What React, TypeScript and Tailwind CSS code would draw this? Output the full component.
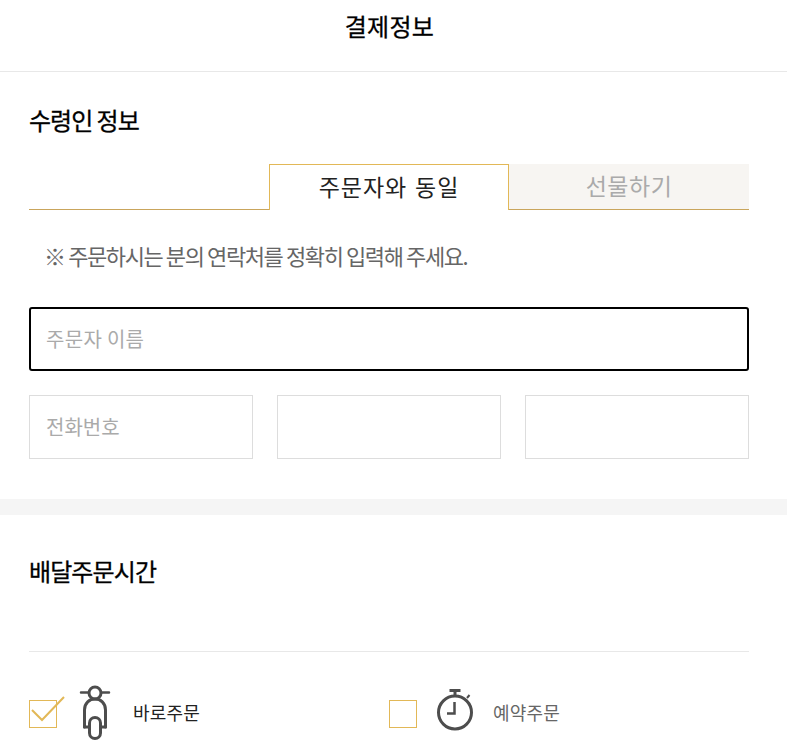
const font = "font-['Noto_Sans_CJK_KR','Noto_Sans',sans-serif]"

function Scooter() {
  return (
    <svg width="34" height="56" viewBox="0 0 34 56" fill="none" stroke="#4d4d4d" strokeWidth="3" strokeLinecap="round">
      <circle cx="17" cy="9" r="6" />
      <path d="M3 8.5h7M24 8.5h7" strokeWidth="2.5" />
      <path d="M6.5 43V26c0-7 5-11 10.5-11s10.5 4 10.5 11v17" />
      <rect x="11.5" y="33.5" width="11" height="21" rx="5.5" />
      <path d="M6.5 43h4M23.5 43h4" />
    </svg>
  )
}

function Timer() {
  return (
    <svg width="38" height="44" viewBox="0 0 38 44" fill="none" stroke="#4d4d4d" strokeWidth="3">
      <circle cx="19" cy="24.5" r="16.5" />
      <path d="M13.5 2.5h11" />
      <path d="M19 3v5" />
      <path d="M31 10l2.5-3" strokeWidth="2" />
      <path d="M18.5 14v11.5H11" strokeWidth="2.5" />
    </svg>
  )
}

export default function App() {
  return (
    <div className={`${font} w-[787px] h-[755px] overflow-hidden bg-white text-black`}>
      <header className="h-[72px] border-b border-[#e8e8e8] flex justify-center pt-[8px] pr-[8px]">
        <h1 className="text-[24px] leading-[36px] tracking-[0.3px] [-webkit-text-stroke:0.3px_black]">결제정보</h1>
      </header>

      <section className="pl-[29px] pr-[38px]">
        <h2 className="mt-[30px] text-[24px] leading-[36px] tracking-[-1px] [-webkit-text-stroke:0.3px_black]">수령인 정보</h2>

        <div className="mt-[26px] flex h-[46px]">
          <div className="flex-1 border-b border-[#c9a55c]" />
          <div className="w-[240px] pb-[2px] border border-b-0 border-[#e2b857] flex items-center justify-center text-[23px] tracking-[0.9px] [word-spacing:2px] text-[#222]">
            주문자와 동일
          </div>
          <div className="w-[240px] pb-[2px] bg-[#f7f5f2] border-b border-[#c9a55c] flex items-center justify-center text-[23px] tracking-[0.5px] text-[#aaa]">
            선물하기
          </div>
        </div>

        <p className="mt-[29px] pl-[15px] text-[22px] leading-[32px] tracking-[-1.4px] text-[#666]">
          ※ 주문하시는 분의 연락처를 정확히 입력해 주세요.
        </p>

        <div className="mt-[36px] h-[64px] border-2 border-black rounded-[3px] pl-[15px] flex items-center text-[20px] tracking-[0.3px] text-[#aaa]">
          주문자 이름
        </div>

        <div className="mt-[24px] grid grid-cols-3 gap-[24px]">
          <div className="h-[64px] border border-[#ddd] pl-[16px] flex items-center text-[20px] text-[#aaa]">전화번호</div>
          <div className="h-[64px] border border-[#ddd]" />
          <div className="h-[64px] border border-[#ddd]" />
        </div>
      </section>

      <div className="mt-[40px] h-[16px] bg-[#f5f5f5]" />

      <section className="pl-[29px] pr-[38px]">
        <h2 className="mt-[38px] text-[24px] leading-[36px] tracking-[-0.9px] [-webkit-text-stroke:0.3px_black]">배달주문시간</h2>
        <div className="mt-[62px] border-t border-[#e8e8e8]" />

        <div className="mt-[32px] flex h-[56px]">
          <div className="w-[360px] flex items-center">
            <div className="relative mt-[4px] w-[28px] h-[28px] border border-[#e2b857]">
              <svg className="absolute left-[1px] top-[-13px]" width="34" height="34" viewBox="0 0 34 34" fill="none" stroke="#e2b857" strokeWidth="2">
                <path d="M1 22l10 10L33 9" />
              </svg>
            </div>
            <div className="ml-[21px]">
              <Scooter />
            </div>
            <span className="ml-[21px] text-[18px] tracking-[0.2px] text-[#222]">바로주문</span>
          </div>
          <div className="flex items-center">
            <div className="mt-[4px] w-[28px] h-[28px] border border-[#e2b857]" />
            <div className="ml-[19px] -mt-[4px]">
              <Timer />
            </div>
            <span className="ml-[19px] text-[18px] tracking-[0.2px] text-[#666]">예약주문</span>
          </div>
        </div>
      </section>
    </div>
  )
}
